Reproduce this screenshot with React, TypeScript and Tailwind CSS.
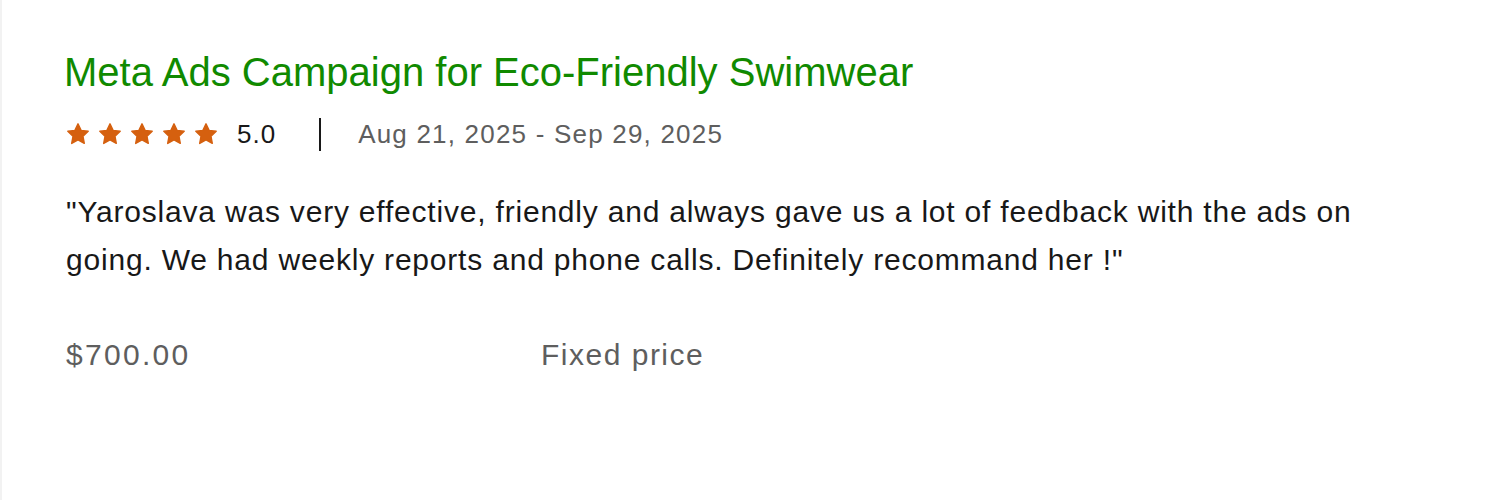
import React from "react";

function Star() {
  return (
    <svg width="24" height="24" viewBox="0 0 24 24" className="shrink-0">
      <path
        d="M12 1.8l3.1 6.6 7.1.9-5.2 5 1.3 7.1L12 17.9l-6.3 3.5 1.3-7.1-5.2-5 7.1-.9z"
        fill="#d5600f"
        stroke="#d5600f"
        strokeWidth="1.4"
        strokeLinejoin="round"
      />
    </svg>
  );
}

export default function App() {
  return (
    <div
      className="w-[1492px] h-[500px] bg-white border-l-2 border-[#f2f2f2] overflow-hidden"
      style={{ fontFamily: '"Liberation Sans", Arial, sans-serif' }}
    >
      <div className="pl-[62px] pt-[49px]">
        <h2 className="text-[40px] leading-[46px] text-[#108a00] font-normal">
          Meta Ads Campaign for Eco-Friendly Swimwear
        </h2>
        <div className="flex items-center mt-[23px] h-[32px] pl-[2px]">
          <div className="flex gap-[8px]">
            <Star />
            <Star />
            <Star />
            <Star />
            <Star />
          </div>
          <span className="ml-[19px] text-[26px] tracking-[1px] text-[#181818]">5.0</span>
          <span className="ml-[43px] w-[2px] h-[33px] bg-[#181818]" />
          <span className="ml-[37px] text-[26px] tracking-[1.2px] text-[#5e5e5e]">
            Aug 21, 2025 - Sep 29, 2025
          </span>
        </div>
        <p className="mt-[38px] pl-[2px] text-[30px] leading-[48px] tracking-[0.8px] text-[#181818] max-w-[1345px]">
          "Yaroslava was very effective, friendly and always gave us a lot of feedback with the ads on going. We had
          weekly reports and phone calls. Definitely recommand her !"
        </p>
        <div className="flex mt-[53px] pl-[2px] text-[30px] leading-[36px] text-[#5e5e5e]">
          <span className="w-[475px] tracking-[2.3px]">$700.00</span>
          <span className="tracking-[1.5px]">Fixed price</span>
        </div>
      </div>
    </div>
  );
}
